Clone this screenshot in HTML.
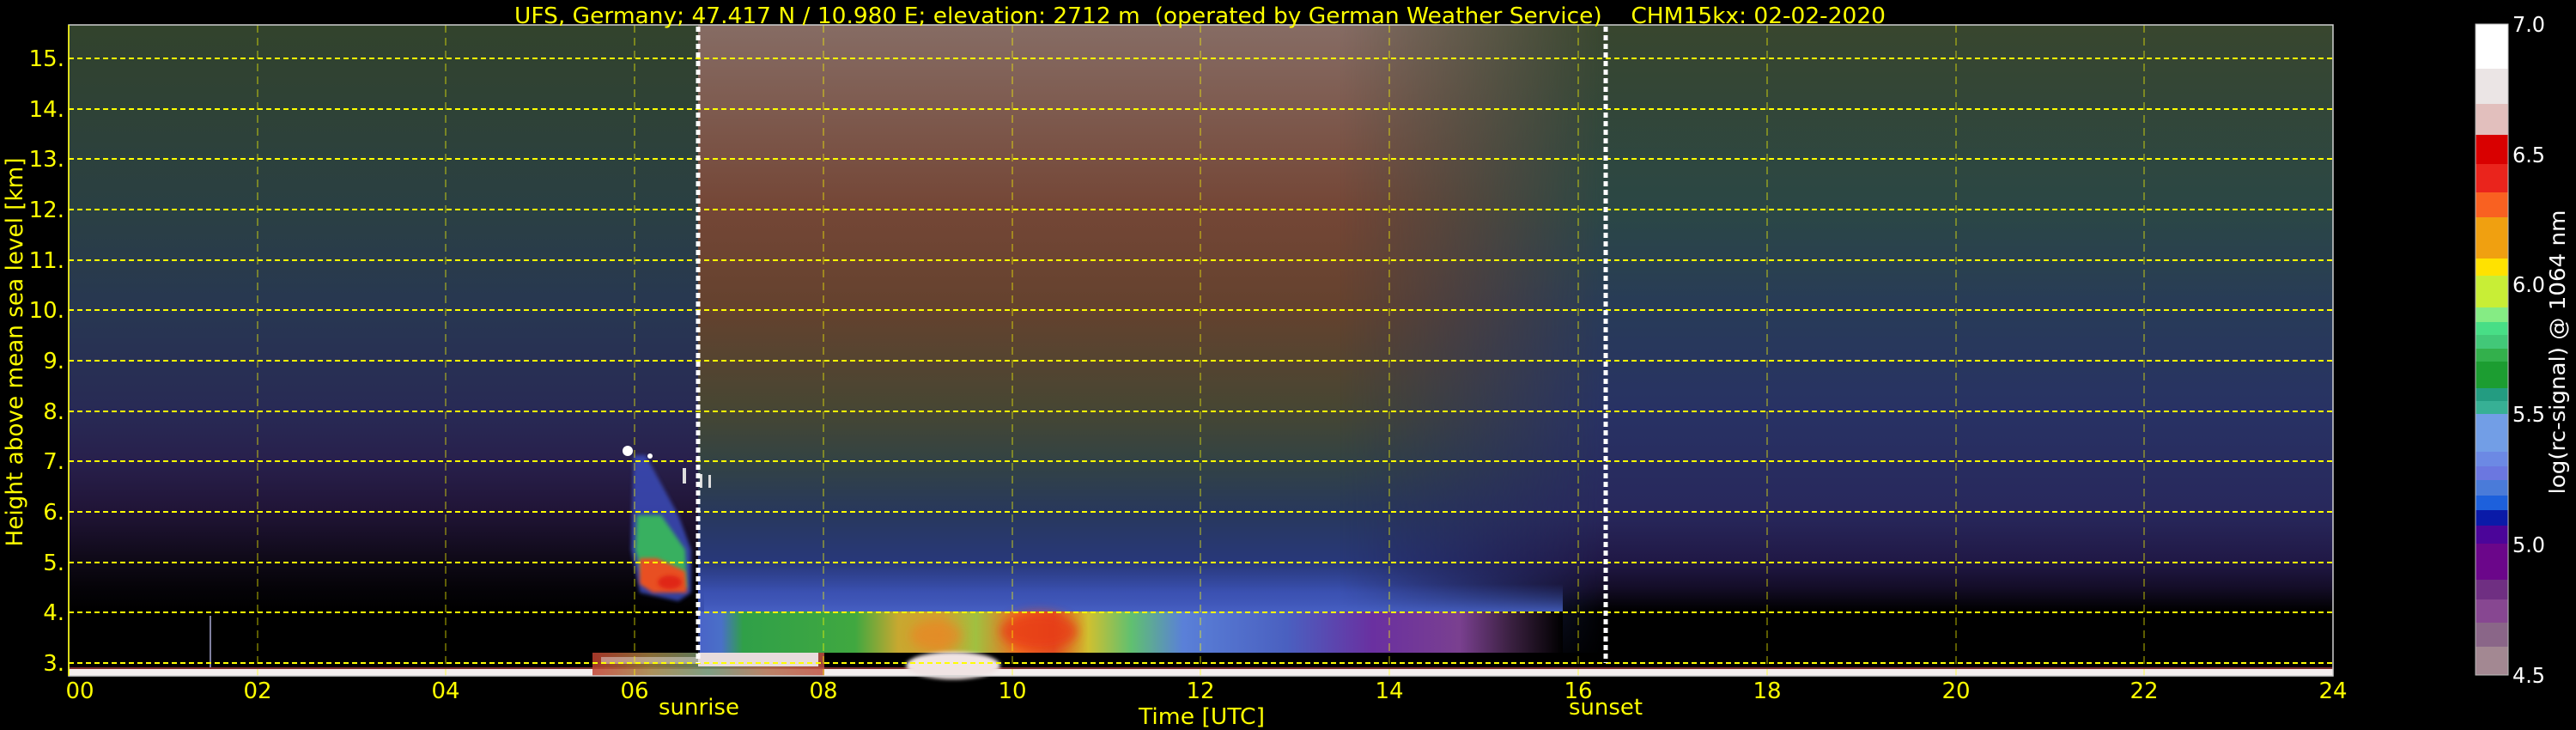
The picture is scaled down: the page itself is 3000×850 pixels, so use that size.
<!DOCTYPE html>
<html><head><meta charset="utf-8"><style>
html,body{margin:0;padding:0;background:#000;}
svg{display:block;}
text{font-family:"DejaVu Sans","Liberation Sans",sans-serif;}
</style></head><body>
<svg width="3000" height="850" viewBox="0 0 3000 850" xmlns="http://www.w3.org/2000/svg">
<defs>
<linearGradient id="gA" x1="0" y1="29" x2="0" y2="787" gradientUnits="userSpaceOnUse">
<stop offset="0" stop-color="#32432c"/>
<stop offset="0.284" stop-color="#2a4043"/>
<stop offset="0.438" stop-color="#283752"/>
<stop offset="0.594" stop-color="#282a55"/>
<stop offset="0.670" stop-color="#28204c"/>
<stop offset="0.748" stop-color="#201436"/>
<stop offset="0.826" stop-color="#0e0916"/>
<stop offset="0.864" stop-color="#050308"/>
<stop offset="0.90" stop-color="#000"/>
<stop offset="1" stop-color="#000"/>
</linearGradient>
<linearGradient id="gB" x1="0" y1="29" x2="0" y2="787" gradientUnits="userSpaceOnUse">
<stop offset="0" stop-color="#866c64"/>
<stop offset="0.284" stop-color="#744636"/>
<stop offset="0.438" stop-color="#64422e"/>
<stop offset="0.594" stop-color="#464633"/>
<stop offset="0.670" stop-color="#334343"/>
<stop offset="0.748" stop-color="#28385c"/>
<stop offset="0.826" stop-color="#28387a"/>
<stop offset="0.872" stop-color="#3a50b0"/>
<stop offset="0.90" stop-color="#3a50b0"/>
<stop offset="1" stop-color="#000"/>
</linearGradient>
<linearGradient id="gC" x1="0" y1="29" x2="0" y2="787" gradientUnits="userSpaceOnUse">
<stop offset="0" stop-color="#38462e"/>
<stop offset="0.284" stop-color="#2b4745"/>
<stop offset="0.438" stop-color="#283b58"/>
<stop offset="0.594" stop-color="#283264"/>
<stop offset="0.748" stop-color="#28285c"/>
<stop offset="0.826" stop-color="#201845"/>
<stop offset="0.864" stop-color="#140d28"/>
<stop offset="0.90" stop-color="#000"/>
<stop offset="1" stop-color="#000"/>
</linearGradient>
<linearGradient id="mH" x1="1560" y1="0" x2="1869" y2="0" gradientUnits="userSpaceOnUse">
<stop offset="0" stop-color="#fff" stop-opacity="0"/>
<stop offset="1" stop-color="#fff" stop-opacity="1"/>
</linearGradient>
<mask id="mk"><rect x="1560" y="29" width="310" height="760" fill="url(#mH)"/></mask>
<linearGradient id="gL" x1="815" y1="0" x2="1820" y2="0" gradientUnits="userSpaceOnUse">
<stop offset="0" stop-color="#4a64c8"/>
<stop offset="0.025" stop-color="#4a70c8"/>
<stop offset="0.05" stop-color="#30a048"/>
<stop offset="0.18" stop-color="#40a840"/>
<stop offset="0.23" stop-color="#c8a830"/>
<stop offset="0.28" stop-color="#d0a030"/>
<stop offset="0.32" stop-color="#a0c040"/>
<stop offset="0.37" stop-color="#f07020"/>
<stop offset="0.41" stop-color="#e05020"/>
<stop offset="0.45" stop-color="#d0c030"/>
<stop offset="0.50" stop-color="#60c070"/>
<stop offset="0.56" stop-color="#5a80d8"/>
<stop offset="0.68" stop-color="#4a60c0"/>
<stop offset="0.78" stop-color="#6a30a0"/>
<stop offset="0.88" stop-color="#7a4090"/>
<stop offset="0.94" stop-color="#3a2040"/>
<stop offset="1" stop-color="#000"/>
</linearGradient>
<linearGradient id="gLtop" x1="0" y1="680" x2="0" y2="716" gradientUnits="userSpaceOnUse">
<stop offset="0" stop-color="#3a50b0" stop-opacity="0"/>
<stop offset="1" stop-color="#4a64c8" stop-opacity="1"/>
</linearGradient>
<linearGradient id="gG" x1="690" y1="0" x2="960" y2="0" gradientUnits="userSpaceOnUse">
<stop offset="0" stop-color="#c04030"/>
<stop offset="0.25" stop-color="#a08040"/>
<stop offset="0.5" stop-color="#6a9070"/>
<stop offset="0.75" stop-color="#b07050"/>
<stop offset="1" stop-color="#c05040"/>
</linearGradient>
<filter id="bl" x="-50%" y="-50%" width="200%" height="200%"><feGaussianBlur stdDeviation="6"/></filter>
<filter id="bl2" x="-50%" y="-50%" width="200%" height="200%"><feGaussianBlur stdDeviation="2"/></filter>
</defs>

<rect x="80" y="29" width="733" height="758" fill="url(#gA)"/>
<rect x="813" y="29" width="1056" height="758" fill="url(#gB)"/>
<rect x="1560" y="29" width="310" height="758" fill="url(#gC)" mask="url(#mk)"/>
<rect x="1869" y="29" width="848" height="758" fill="url(#gC)"/>

<!-- boundary layer -->
<rect x="820" y="680" width="1000" height="36" fill="url(#gLtop)"/>
<rect x="815" y="712" width="1005" height="50" fill="url(#gL)"/>
<ellipse cx="1210" cy="735" rx="45" ry="22" fill="#e83a18" filter="url(#bl)" opacity="0.8"/>
<ellipse cx="1090" cy="740" rx="30" ry="18" fill="#f08020" filter="url(#bl)" opacity="0.6"/>
<rect x="813" y="760" width="1056" height="16" fill="#000"/>
<rect x="813" y="776" width="1904" height="11" fill="#000"/>

<!-- 06h plume -->
<path d="M738 530 L752 530 L790 600 L805 640 L805 690 L790 700 L745 690 L735 640 Z" fill="#3a4cb8" filter="url(#bl2)" opacity="0.85"/>
<path d="M742 600 L770 600 L798 640 L800 685 L750 680 L740 640 Z" fill="#38b060" filter="url(#bl2)"/>
<path d="M745 650 L765 650 L798 665 L800 690 L760 690 L745 680 Z" fill="#e85020" filter="url(#bl2)"/>
<ellipse cx="780" cy="678" rx="14" ry="8" fill="#e02818" filter="url(#bl2)"/>
<circle cx="731" cy="525" r="6" fill="#fff"/>
<circle cx="757" cy="531" r="3" fill="#fff"/>
<rect x="795" y="545" width="4" height="18" fill="#ddd"/>
<rect x="815" y="552" width="3" height="16" fill="#ddd"/>
<rect x="825" y="553" width="3" height="15" fill="#ddd"/>

<!-- ground band -->
<rect x="80" y="777" width="2637" height="2" fill="#b04040" opacity="0.7"/>
<rect x="80" y="779" width="2637" height="8" fill="#f4eeee"/>
<rect x="690" y="760" width="270" height="27" fill="url(#gG)" opacity="0.85"/>
<rect x="700" y="765" width="200" height="8" fill="#e8e0e0" opacity="0.5"/>
<rect x="813" y="760" width="140" height="16" fill="#e8dcdc"/>
<ellipse cx="1110" cy="775" rx="55" ry="16" fill="#f0e4e4" filter="url(#bl2)"/>
<rect x="244" y="717" width="2" height="60" fill="#8080a0"/>

<!-- gridlines -->
<g stroke="#ffff00" stroke-width="2" stroke-dasharray="6,4">
<line x1="80" y1="68" x2="2717" y2="68"/><line x1="80" y1="127" x2="2717" y2="127"/>
<line x1="80" y1="185" x2="2717" y2="185"/><line x1="80" y1="244" x2="2717" y2="244"/>
<line x1="80" y1="303" x2="2717" y2="303"/><line x1="80" y1="361" x2="2717" y2="361"/>
<line x1="80" y1="420" x2="2717" y2="420"/><line x1="80" y1="479" x2="2717" y2="479"/>
<line x1="80" y1="537" x2="2717" y2="537"/><line x1="80" y1="596" x2="2717" y2="596"/>
<line x1="80" y1="655" x2="2717" y2="655"/><line x1="80" y1="713" x2="2717" y2="713"/>
<line x1="80" y1="772" x2="2717" y2="772"/>
</g>
<g stroke="#ffff00" stroke-width="1.2" stroke-dasharray="9,6" opacity="0.6">
<line x1="300" y1="29" x2="300" y2="787"/><line x1="519" y1="29" x2="519" y2="787"/>
<line x1="739" y1="29" x2="739" y2="787"/><line x1="959" y1="29" x2="959" y2="787"/>
<line x1="1179" y1="29" x2="1179" y2="787"/><line x1="1398" y1="29" x2="1398" y2="787"/>
<line x1="1618" y1="29" x2="1618" y2="787"/><line x1="1838" y1="29" x2="1838" y2="787"/>
<line x1="2058" y1="29" x2="2058" y2="787"/><line x1="2278" y1="29" x2="2278" y2="787"/>
<line x1="2497" y1="29" x2="2497" y2="787"/>
</g>
<g stroke="#ffffff" stroke-width="5" stroke-dasharray="6,4">
<line x1="813" y1="31" x2="813" y2="772"/>
<line x1="1870" y1="31" x2="1870" y2="772"/>
</g>
<rect x="80" y="29" width="2637" height="758" fill="none" stroke="#d0d0d0" stroke-width="1.5"/>
<line x1="80" y1="29" x2="80" y2="787" stroke="#ffff00" stroke-width="1.5"/>

<text x="599" y="27" font-size="26" fill="#ffff00" textLength="1597" lengthAdjust="spacingAndGlyphs" xml:space="preserve">UFS, Germany; 47.417 N / 10.980 E; elevation: 2712 m  (operated by German Weather Service)    CHM15kx: 02-02-2020</text>

<g font-size="26" fill="#ffff00" text-anchor="end">
<text x="75" y="77">15.</text><text x="75" y="136">14.</text><text x="75" y="194">13.</text>
<text x="75" y="253">12.</text><text x="75" y="312">11.</text><text x="75" y="370">10.</text>
<text x="75" y="429">9.</text><text x="75" y="488">8.</text><text x="75" y="546">7.</text>
<text x="75" y="605">6.</text><text x="75" y="664">5.</text><text x="75" y="722">4.</text>
<text x="75" y="781">3.</text>
</g>
<text transform="translate(26,410) rotate(-90)" text-anchor="middle" font-size="27" fill="#ffff00" textLength="453" lengthAdjust="spacingAndGlyphs">Height above mean sea level [km]</text>

<g font-size="26" fill="#ffff00" text-anchor="middle">
<text x="93" y="813">00</text><text x="300" y="813">02</text><text x="519" y="813">04</text>
<text x="739" y="813">06</text><text x="959" y="813">08</text><text x="1179" y="813">10</text>
<text x="1398" y="813">12</text><text x="1618" y="813">14</text><text x="1838" y="813">16</text>
<text x="2058" y="813">18</text><text x="2278" y="813">20</text><text x="2497" y="813">22</text>
<text x="2717" y="813">24</text>
</g>
<text x="767" y="832" font-size="26" fill="#ffff00" textLength="94" lengthAdjust="spacingAndGlyphs">sunrise</text>
<text x="1827" y="832" font-size="26" fill="#ffff00" textLength="86" lengthAdjust="spacingAndGlyphs">sunset</text>
<text x="1326" y="843" font-size="26" fill="#ffff00" textLength="147" lengthAdjust="spacingAndGlyphs">Time [UTC]</text>

<g>
<rect x="2883" y="28" width="38" height="52" fill="#ffffff"/>
<rect x="2883" y="80" width="38" height="41" fill="#ebe5e5"/>
<rect x="2883" y="121" width="38" height="36" fill="#e2bfbd"/>
<rect x="2883" y="157" width="38" height="34" fill="#d90000"/>
<rect x="2883" y="191" width="38" height="33" fill="#ea241c"/>
<rect x="2883" y="224" width="38" height="29" fill="#f96121"/>
<rect x="2883" y="253" width="38" height="48" fill="#f0a010"/>
<rect x="2883" y="301" width="38" height="20" fill="#ffe200"/>
<rect x="2883" y="321" width="38" height="37" fill="#c8ee36"/>
<rect x="2883" y="358" width="38" height="17" fill="#85ec84"/>
<rect x="2883" y="375" width="38" height="15" fill="#48de86"/>
<rect x="2883" y="390" width="38" height="16" fill="#42c878"/>
<rect x="2883" y="406" width="38" height="15" fill="#33b04c"/>
<rect x="2883" y="421" width="38" height="31" fill="#1c9d31"/>
<rect x="2883" y="452" width="38" height="15" fill="#239c81"/>
<rect x="2883" y="467" width="38" height="15" fill="#37b095"/>
<rect x="2883" y="482" width="38" height="44" fill="#729ee6"/>
<rect x="2883" y="526" width="38" height="17" fill="#6c89e4"/>
<rect x="2883" y="543" width="38" height="16" fill="#6b77e0"/>
<rect x="2883" y="559" width="38" height="18" fill="#4a7bd9"/>
<rect x="2883" y="577" width="38" height="17" fill="#1d60dc"/>
<rect x="2883" y="594" width="38" height="18" fill="#0a1aa8"/>
<rect x="2883" y="612" width="38" height="21" fill="#4b0599"/>
<rect x="2883" y="633" width="38" height="42" fill="#6b068a"/>
<rect x="2883" y="675" width="38" height="23" fill="#6f2f82"/>
<rect x="2883" y="698" width="38" height="27" fill="#874791"/>
<rect x="2883" y="725" width="38" height="28" fill="#8a6688"/>
<rect x="2883" y="753" width="38" height="33" fill="#a38892"/>
<rect x="2883" y="28" width="38" height="758" fill="none" stroke="#bbbbbb" stroke-width="1"/>
</g>
<g font-size="25" fill="#ffffff">
<text x="2926" y="37" textLength="38" lengthAdjust="spacingAndGlyphs">7.0</text>
<text x="2926" y="189" textLength="38" lengthAdjust="spacingAndGlyphs">6.5</text>
<text x="2926" y="340" textLength="38" lengthAdjust="spacingAndGlyphs">6.0</text>
<text x="2926" y="491" textLength="38" lengthAdjust="spacingAndGlyphs">5.5</text>
<text x="2926" y="643" textLength="38" lengthAdjust="spacingAndGlyphs">5.0</text>
<text x="2926" y="795" textLength="38" lengthAdjust="spacingAndGlyphs">4.5</text>
</g>
<text transform="translate(2987,410) rotate(-90)" text-anchor="middle" font-size="25" fill="#ffffff" textLength="331" lengthAdjust="spacingAndGlyphs">log(rc-signal) @ 1064 nm</text>
</svg>
</body></html>
